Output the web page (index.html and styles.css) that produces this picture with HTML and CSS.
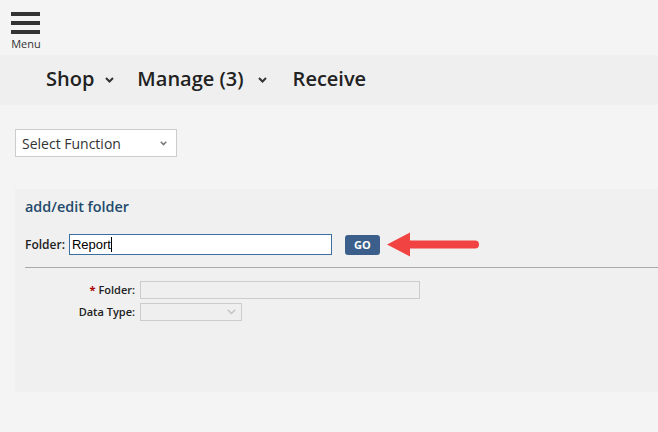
FILE: index.html
```html
<!DOCTYPE html>
<html lang="en">
<head>
<meta charset="utf-8">
<title>add/edit folder</title>
<link rel="stylesheet" href="styles.css">
</head>
<body>
<header class="top-bar">
  <button class="menu-btn" type="button">
    <span class="bars"><span></span><span></span><span></span></span>
    <span class="menu-label">Menu</span>
  </button>
</header>
<nav class="main-nav">
  <a class="nav-item" href="#">Shop<svg class="chev" viewBox="0 0 9 6"><path d="M1 1l3.5 3.5L8 1" /></svg></a>
  <a class="nav-item nav-item--wide" href="#">Manage (3)<svg class="chev" viewBox="0 0 9 6"><path d="M1 1l3.5 3.5L8 1" /></svg></a>
  <a class="nav-item" href="#">Receive</a>
</nav>
<main class="content">
  <div class="func-select">
    <span>Select Function</span>
    <svg class="sel-chev" viewBox="0 0 7 5"><path d="M0.8 0.8l2.7 2.8 2.7-2.8" /></svg>
  </div>
  <section class="panel">
    <h2 class="panel-title">add/edit folder</h2>
    <div class="search-row">
      <label class="row-label">Folder:</label>
      <div class="text-box">Report<span class="caret"></span></div>
      <button class="go-btn" type="button">GO</button>
      <svg class="callout-arrow" viewBox="0 0 93 25"><polygon points="0,12.5 23,0.5 23,24.5" /><line x1="20" y1="12.5" x2="88" y2="12.5" /></svg>
    </div>
    <hr class="divider">
    <div class="form-grid">
      <label class="field-label"><span class="req">*</span> Folder:</label>
      <div class="field-input"></div>
      <label class="field-label">Data Type:</label>
      <div class="field-select"><svg class="dis-chev" viewBox="0 0 9 6"><path d="M0.8 0.8l3.7 3.7 3.7-3.7" /></svg></div>
    </div>
  </section>
</main>
</body>
</html>
```
FILE: styles.css
```css
* { box-sizing: border-box; }
html, body { margin: 0; padding: 0; }
body {
  background: #f4f4f4;
  font-family: "Open Sans", "Liberation Sans", sans-serif;
  color: #222;
  width: 658px;
  height: 432px;
  overflow: hidden;
}
.top-bar {
  height: 55px;
  padding: 12px 0 0 11px;
  background: #f4f4f4;
}
.menu-btn {
  display: flex;
  flex-direction: column;
  align-items: center;
  border: 0;
  background: none;
  padding: 0;
  margin: 0;
  width: 29px;
  font-family: inherit;
}
.bars { display: flex; flex-direction: column; gap: 5px; }
.bars span { display: block; width: 29px; height: 4px; background: #333; }
.menu-label {
  font-size: 11px;
  line-height: 13px;
  color: #333;
  margin-top: 3px;
  margin-left: 1px;
}
.main-nav {
  height: 50px;
  background: #efefef;
  display: flex;
  align-items: center;
  padding-left: 46px;
  padding-bottom: 3px;
}
.nav-item {
  display: flex;
  align-items: center;
  font-size: 20px;
  font-weight: 600;
  color: #222;
  text-decoration: none;
  margin-right: 24px;
}
.nav-item--wide { margin-left: -1px; margin-right: 26px; }
.chev {
  width: 9px;
  height: 6px;
  margin-left: 11px;
  margin-top: 3px;
  fill: none;
  stroke: #333;
  stroke-width: 2;
}
.nav-item--wide .chev { margin-left: 14px; }
.content { padding: 24px 0 0 15px; }
.func-select {
  width: 162px;
  height: 28px;
  background: #fff;
  border: 1px solid #ccc;
  display: flex;
  align-items: center;
  justify-content: space-between;
  padding: 0 9px 0 6px;
  font-size: 14px;
  color: #333;
}
.sel-chev {
  width: 7px;
  height: 5px;
  fill: none;
  stroke: #777;
  stroke-width: 1.6;
}
.panel {
  margin-top: 32px;
  height: 203px;
  width: 660px;
  background: #f0f0f0;
  padding: 9px 0 0 10px;
}
.panel-title {
  margin: 0;
  font-size: 14.4px;
  line-height: 18px;
  font-weight: 600;
  color: #234a6c;
}
.search-row {
  display: flex;
  align-items: center;
  margin-top: 18px;
  height: 21px;
}
.row-label {
  font-size: 12px;
  font-weight: 600;
  color: #222;
  margin-right: 4px;
}
.text-box {
  width: 263px;
  height: 21px;
  border: 1px solid #3b6fa0;
  background: #fff;
  font-family: "Liberation Sans", Arial, sans-serif;
  font-size: 13px;
  line-height: 19px;
  padding-left: 2px;
  color: #000;
  display: flex;
  align-items: center;
}
.caret {
  display: inline-block;
  width: 1px;
  height: 15px;
  background: #000;
}
.go-btn {
  margin-left: 13px;
  width: 35px;
  height: 20px;
  border: 0;
  border-radius: 3px;
  background: #3b5f8a;
  color: #fff;
  font-family: "Open Sans", sans-serif;
  font-size: 11px;
  font-weight: 700;
  padding: 0;
}
.callout-arrow {
  margin-left: 7px;
  width: 93px;
  height: 25px;
  fill: #f24343;
  stroke: #f24343;
}
.callout-arrow polygon { stroke: none; }
.callout-arrow line { stroke-width: 8; stroke-linecap: round; }
.divider {
  margin: 12px 0 0 0;
  border: 0;
  border-top: 1px solid #aaa;
  height: 0;
}
.form-grid {
  display: grid;
  grid-template-columns: 110px auto;
  justify-content: start;
  column-gap: 5px;
  row-gap: 4px;
  margin-top: 13px;
}
.field-label {
  font-size: 11px;
  font-weight: 600;
  color: #222;
  text-align: right;
  align-self: center;
  line-height: 16px;
}
.req { color: #a00; font-weight: 700; }
.field-input {
  width: 280px;
  height: 18px;
  border: 1px solid #ccc;
  background: #efefef;
}
.field-select {
  width: 102px;
  height: 18px;
  border: 1px solid #ccc;
  background: #efefef;
  display: flex;
  align-items: center;
  justify-content: flex-end;
  padding-right: 5px;
}
.dis-chev {
  width: 9px;
  height: 6px;
  fill: none;
  stroke: #c4c4c4;
  stroke-width: 1.5;
}
```
